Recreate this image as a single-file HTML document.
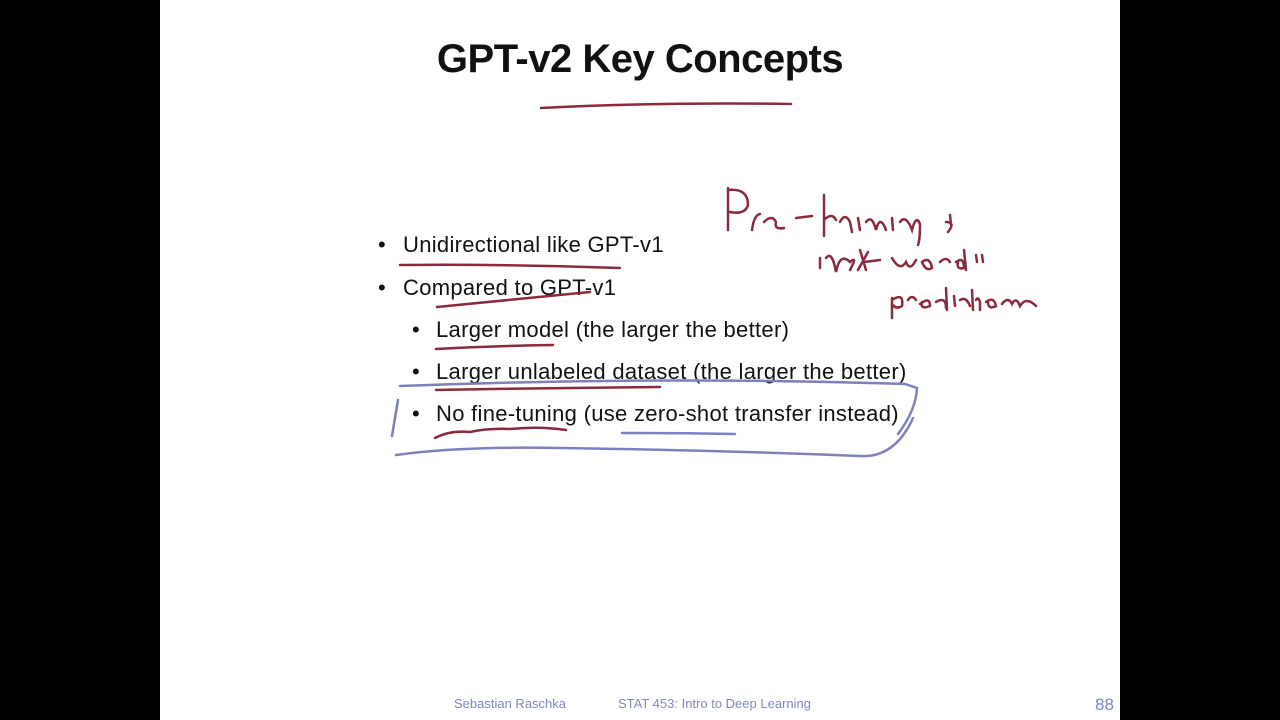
<!DOCTYPE html>
<html><head><style>
html,body{margin:0;padding:0;background:#000;}
#s{position:absolute;left:160px;top:0;width:960px;height:720px;background:#fff;font-family:"Liberation Sans",sans-serif;overflow:hidden;}
.t{position:absolute;white-space:nowrap;color:#111;}
h1{position:absolute;left:0;width:960px;top:37px;margin:0;text-align:center;font-size:40px;font-weight:bold;color:#111;letter-spacing:-0.5px;}
.b{font-size:22px;letter-spacing:0.3px;}
.f{position:absolute;font-size:13px;color:#8088b8;top:696px;}
</style></head><body><div id="s">
<h1>GPT-v2 Key Concepts</h1>
<div class="t b" style="left:218px;top:232px">•</div><div class="t b" style="left:243px;top:232px">Unidirectional like GPT-v1</div>
<div class="t b" style="left:218px;top:275px">•</div><div class="t b" style="left:243px;top:275px">Compared to GPT-v1</div>
<div class="t b" style="left:252px;top:317px">•</div><div class="t b" style="left:276px;top:317px">Larger model (the larger the better)</div>
<div class="t b" style="left:252px;top:359px">•</div><div class="t b" style="left:276px;top:359px">Larger unlabeled dataset (the larger the better)</div>
<div class="t b" style="left:252px;top:401px">•</div><div class="t b" style="left:276px;top:401px">No fine-tuning (use zero-shot transfer instead)</div>
<div class="f" style="left:294px">Sebastian Raschka</div>
<div class="f" style="left:458px">STAT 453: Intro to Deep Learning</div>
<div class="f" style="left:935px;top:695px;font-size:17px">88</div>
<svg width="960" height="720" style="position:absolute;left:0;top:0" fill="none" stroke-linecap="round">
<g stroke="#8a2a3a" stroke-width="2.5">
<path d="M381 108 Q500 102 631 104"/>
<path d="M240 265 Q350 264 460 268"/>
<path d="M277 307 Q350 300 430 292"/>
<path d="M276 349 Q330 346 393 345"/>
<path d="M276 390 Q380 388 500 387"/>
<path d="M275 438 Q290 430 310 432 Q330 428 350 429 Q380 426 406 430"/>
<path d="M568 188 L568 230 M568 190 Q588 188 588 205 Q585 215 570 212 M592 230 Q594 215 600 214 M604 222 Q612 214 616 222 Q614 230 624 228 M636 218 L652 216 M664 195 L664 236 M664 220 Q672 212 676 220 M680 222 Q685 212 690 222 L692 232 M698 218 L700 230 M706 222 Q712 214 716 230 Q720 214 726 230 M732 218 L733 230 M740 222 Q746 214 752 230 Q756 214 760 224 Q760 240 758 245 M790 215 L791 225 M786 222 Q796 222 788 232"/>
<path d="M660 258 L660 268 M666 258 Q672 250 676 272 Q680 252 690 262 Q698 255 690 270 M700 250 L706 270 M708 252 L698 270 M704 262 L720 260 M732 258 Q740 272 746 262 Q750 272 756 260 M762 262 Q770 256 772 268 Q766 272 762 262 M780 262 Q786 256 790 262 M796 262 Q804 256 804 268 Q796 270 798 262 M804 250 L806 270 M816 255 L817 262 M822 255 L823 262"/>
<path d="M732 298 L732 318 M732 300 Q744 292 742 306 Q736 310 732 304 M748 300 Q752 294 756 300 M760 304 Q770 296 770 306 Q760 310 762 302 M776 302 Q786 296 786 308 M786 288 L787 310 M794 296 L795 306 M800 300 Q806 296 810 306 M812 290 L813 310 M816 300 Q818 296 820 302 L820 310 M826 302 Q834 296 836 306 Q828 310 828 302 M842 304 Q848 296 852 304 Q856 296 860 306 Q866 296 876 306"/>
</g>
<g stroke="#7c80bd" stroke-width="2.5">
<path d="M240 386 Q500 376 745 384 L757 388 Q756 410 738 434 M238 400 L232 436 M236 455 Q300 446 400 448 Q550 450 700 456 Q735 458 753 418"/>
<path d="M462 433 Q520 433 575 434"/>
</g>
</svg>
</div></body></html>
